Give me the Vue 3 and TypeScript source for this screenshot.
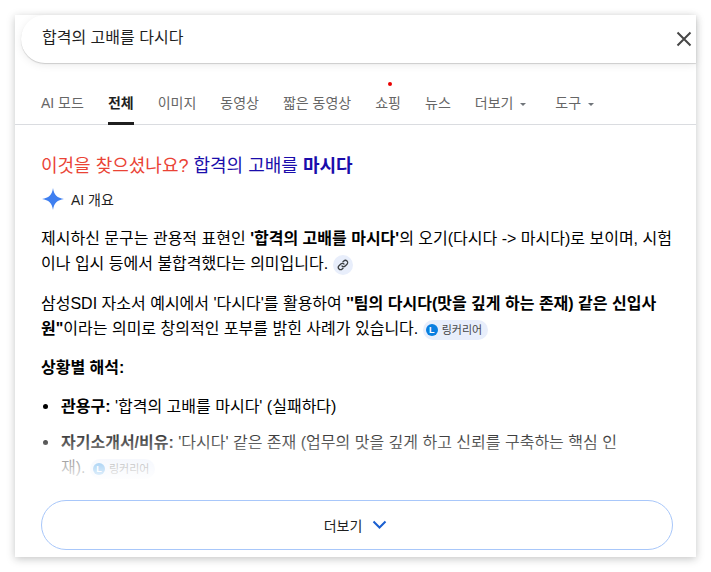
<script setup lang="ts">
const tabs: { label: string; active?: boolean; caret?: boolean; dot?: boolean; cls?: string }[] = [
  { label: 'AI 모드' },
  { label: '전체', active: true },
  { label: '이미지' },
  { label: '동영상' },
  { label: '짧은 동영상' },
  { label: '쇼핑', dot: true },
  { label: '뉴스' },
  { label: '더보기', caret: true },
  { label: '도구', caret: true, cls: 'tools' }
]
</script>

<template>
  <div class="page">
    <main class="card">
      <header class="search">
        <span class="query">합격의 고배를 다시다</span>
        <svg class="close" width="16" height="16" viewBox="0 0 16 16" aria-hidden="true">
          <path d="M1.5 1.5 L14.5 14.5 M14.5 1.5 L1.5 14.5" stroke="#474747" stroke-width="2" fill="none" />
        </svg>
      </header>

      <nav class="tabs">
        <a v-for="t in tabs" :key="t.label" class="tab" :class="[{ active: t.active }, t.cls]">
          <i v-if="t.dot" class="dot"></i>
          {{ t.label }}
          <i v-if="t.caret" class="caret"></i>
        </a>
      </nav>

      <section class="content">
        <h2 class="suggest">
          <span class="red">이것을 찾으셨나요?</span>
          <span class="blue"> 합격의 고배를 <b>마시다</b></span>
        </h2>

        <div class="ai-head">
          <svg width="24" height="24" viewBox="0 0 24 24" aria-hidden="true">
            <path d="M12 1 C12.8 7.6 16.4 11.2 23 12 C16.4 12.8 12.8 16.4 12 23 C11.2 16.4 7.6 12.8 1 12 C7.6 11.2 11.2 7.6 12 1 Z" fill="#3f7ff0" />
          </svg>
          <span>AI 개요</span>
        </div>

        <div class="overview">
          <p>제시하신 문구는 관용적 표현인 <b>'합격의 고배를 마시다'</b>의 오기(다시다 -&gt; 마시다)로 보이며, 시험<br />이나 입시 등에서 불합격했다는 의미입니다.
            <span class="link-chip">
              <svg width="12" height="12" viewBox="0 0 24 24" aria-hidden="true">
                <path d="M10 14 a4.5 4.5 0 0 0 6.4 0 l3.6-3.6 a4.5 4.5 0 0 0-6.4-6.4 l-1.6 1.6 M14 10 a4.5 4.5 0 0 0-6.4 0 l-3.6 3.6 a4.5 4.5 0 0 0 6.4 6.4 l1.6-1.6" fill="none" stroke="#3c4043" stroke-width="2.6" stroke-linecap="round" />
              </svg>
            </span>
          </p>
          <p class="tight">삼성SDI 자소서 예시에서 '다시다'를 활용하여 <b>''팀의 다시다(맛을 깊게 하는 존재) 같은 신입사<br />원"</b>이라는 의미로 창의적인 포부를 밝힌 사례가 있습니다.
            <span class="source"><i class="logo">L</i>링커리어</span>
          </p>
          <p class="tight"><b>상황별 해석:</b></p>
          <ul>
            <li><b>관용구:</b> '합격의 고배를 마시다' (실패하다)</li>
            <li><b>자기소개서/비유:</b> '다시다' 같은 존재 (업무의 맛을 깊게 하고 신뢰를 구축하는 핵심 인<br />재).
              <span class="source"><i class="logo">L</i>링커리어</span>
            </li>
          </ul>
          <div class="fade"></div>
        </div>

        <button class="more" type="button">
          더보기
          <svg width="18" height="10" viewBox="0 0 18 10" aria-hidden="true">
            <path d="M1.5 1.5 L7.5 7.5 L13.5 1.5" fill="none" stroke="#1a5fd0" stroke-width="2" />
          </svg>
        </button>
      </section>
    </main>
  </div>
</template>

<style>
html, body { margin: 0; background: #fff; }
</style>

<style scoped>
.page {
  width: 711px;
  height: 572px;
  box-sizing: border-box;
  padding: 15px;
  overflow: hidden;
  font-family: "Liberation Sans", "Noto Sans CJK KR", sans-serif;
  color: #1f1f1f;
}
.card {
  width: 681px;
  height: 542px;
  background: #fff;
  box-shadow: 0 2px 8px rgba(32, 33, 36, 0.26);
  display: flex;
  flex-direction: column;
}
.search {
  height: 48px;
  margin-left: 6px;
  padding: 0 4px 0 21px;
  display: flex;
  align-items: center;
  justify-content: space-between;
  border-radius: 24px 0 0 24px;
  box-shadow: 0 1px 1px rgba(0, 0, 0, 0.16), 0 2px 8px rgba(0, 0, 0, 0.08);
  background: #fff;
  position: relative;
}
.query { font-size: 16px; color: #1f1f1f; position: relative; top: -3px; }
.close { flex: none; }
.tabs {
  height: 61px;
  padding: 0 0 0 26px;
  display: flex;
  align-items: flex-end;
  gap: 24px;
  border-bottom: 1px solid #dadce0;
  box-sizing: content-box;
}
.tab {
  position: relative;
  font-size: 14px;
  line-height: 20px;
  padding-bottom: 9px;
  color: #666;
  border-bottom: 3px solid transparent;
  margin-bottom: -1px;
  white-space: nowrap;
  display: block;
}
.tab.active { color: #1f1f1f; font-weight: 700; border-bottom-color: #1f1f1f; }
.tab.tools { margin-left: 5px; }
.caret {
  display: inline-block;
  width: 0;
  height: 0;
  margin-left: 3px;
  border: 3px solid transparent;
  border-top-color: #70757a;
  border-bottom: 0;
  vertical-align: 2px;
}
.dot {
  position: absolute;
  left: 13px;
  top: -11px;
  width: 4px;
  height: 4px;
  border-radius: 50%;
  background: #ea0000;
}
.content {
  flex: 1;
  min-height: 0;
  padding: 28px 23px 7px 26px;
  display: flex;
  flex-direction: column;
}
.suggest { margin: 0; font-size: 18px; line-height: 26px; font-weight: 400; }
.red { color: #ea4335; }
.blue { color: #1a0dab; }
.ai-head {
  display: flex;
  align-items: center;
  gap: 6px;
  margin-top: 8px;
  font-size: 14px;
  color: #1f1f1f;
}
.overview {
  position: relative;
  flex: 1;
  min-height: 0;
  overflow: hidden;
  margin-top: 15px;
  font-size: 16px;
  line-height: 25px;
  color: #000;
}
.overview p { margin: 0 0 15px; }
.overview p.tight { margin-bottom: 14px; }
.overview ul { margin: 0; padding: 0 0 0 20px; list-style: none; }
.overview li { margin-bottom: 11px; position: relative; }
.overview li::before {
  content: "";
  position: absolute;
  left: -18px;
  top: 10px;
  width: 5px;
  height: 5px;
  border-radius: 50%;
  background: #000;
}
.link-chip {
  display: inline-flex;
  align-items: center;
  justify-content: center;
  width: 20px;
  height: 20px;
  border-radius: 50%;
  background: #e8eefb;
  vertical-align: middle;
  margin-left: 0;
}
.source {
  display: inline-flex;
  align-items: center;
  gap: 4px;
  height: 20px;
  line-height: 20px;
  padding: 0 6px 0 3px;
  border-radius: 10px;
  background: #e8eefb;
  font-size: 11px;
  color: #474747;
  vertical-align: middle;
}
.logo {
  width: 12px;
  height: 12px;
  border-radius: 50%;
  background: #0a7fe0;
  color: #fff;
  font-size: 9px;
  font-weight: 700;
  font-style: normal;
  line-height: 12px;
  text-align: center;
}
.fade {
  position: absolute;
  left: 0;
  right: 0;
  bottom: 0;
  height: 80px;
  background: linear-gradient(to bottom, rgba(255,255,255,0), #fff 80%);
  pointer-events: none;
}
.more {
  flex: none;
  height: 50px;
  border: 1px solid #a8c7fa;
  border-radius: 25px;
  background: #fff;
  font-family: inherit;
  font-size: 14px;
  color: #1f1f1f;
  display: flex;
  align-items: center;
  justify-content: center;
  gap: 10px;
}
</style>
